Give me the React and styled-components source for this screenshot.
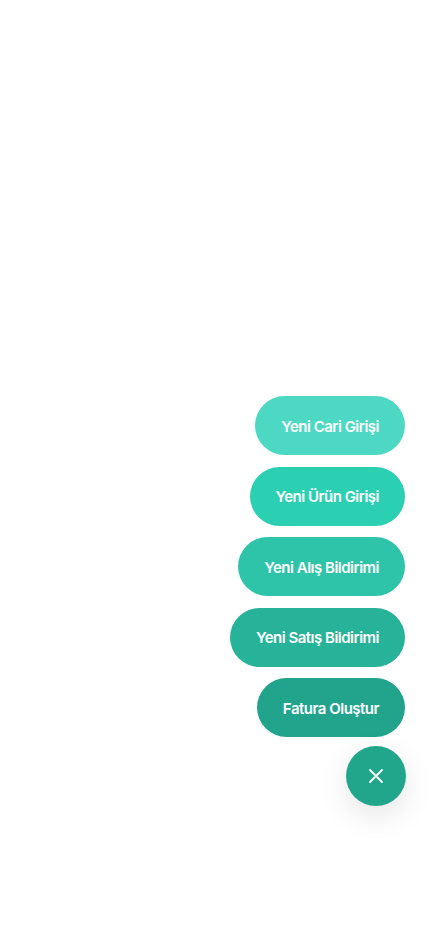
import React from 'react';
import styled, { createGlobalStyle } from 'styled-components';

const GlobalStyle = createGlobalStyle`
  html, body {
    margin: 0;
    padding: 0;
    background: #ffffff;
  }
  body {
    font-family: 'Inter', 'Noto Sans', sans-serif;
  }
`;

const Screen = styled.div`
  height: 932px;
  width: 430px;
  box-sizing: border-box;
  display: flex;
  flex-direction: column;
  justify-content: flex-end;
  align-items: flex-end;
  padding: 0 24px 126px 0;
  background: #ffffff;
`;

const ActionList = styled.div`
  display: flex;
  flex-direction: column;
  align-items: flex-end;
  gap: 11.5px;
  margin-right: 1px;
`;

const ActionButton = styled.button`
  height: 59px;
  padding: 1px 26px 0;
  border: none;
  border-radius: 30px;
  background: ${(props) => props.color};
  color: #ffffff;
  font-family: 'Inter', sans-serif;
  font-weight: 600;
  font-size: 15px;
  letter-spacing: -0.5px;
  white-space: nowrap;
  cursor: pointer;
`;

const CloseFab = styled.button`
  margin-top: 9px;
  width: 60px;
  height: 60px;
  border: none;
  border-radius: 50%;
  background: #22a68b;
  display: flex;
  align-items: center;
  justify-content: center;
  box-shadow: 0 10px 30px rgba(0, 0, 0, 0.1);
  cursor: pointer;
`;

const actions = [
  { label: 'Yeni Cari Girişi', color: '#4dd8c3' },
  { label: 'Yeni Ürün Girişi', color: '#2bcfb2' },
  { label: 'Yeni Alış Bildirimi', color: '#2ec4a9' },
  { label: 'Yeni Satış Bildirimi', color: '#27b29a' },
  { label: 'Fatura Oluştur', color: '#21a48b' },
];

const App = () => (
  <>
    <GlobalStyle />
    <Screen>
      <ActionList>
        {actions.map((a) => (
          <ActionButton key={a.label} color={a.color}>
            {a.label}
          </ActionButton>
        ))}
      </ActionList>
      <CloseFab aria-label="Kapat">
        <svg width="16" height="16" viewBox="0 0 16 16" fill="none">
          <path
            d="M2 2L14 14M14 2L2 14"
            stroke="#ffffff"
            strokeWidth="1.8"
            strokeLinecap="round"
          />
        </svg>
      </CloseFab>
    </Screen>
  </>
);

export default App;
